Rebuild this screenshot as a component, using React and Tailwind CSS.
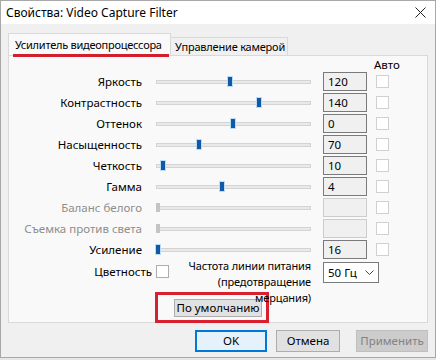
const ROWS = [
  { label: "Яркость", pos: 74, value: "120" },
  { label: "Контрастность", pos: 103, value: "140" },
  { label: "Оттенок", pos: 77, value: "0" },
  { label: "Насыщенность", pos: 43, value: "70" },
  { label: "Четкость", pos: 7, value: "10" },
  { label: "Гамма", pos: 66, value: "4" },
  { label: "Баланс белого", pos: 2, value: "", disabled: true },
  { label: "Съемка против света", pos: 2, value: "", disabled: true },
  { label: "Усиление", pos: 2, value: "16" },
];

function Slider({ pos, disabled }) {
  return (
    <div className="relative w-[155px] h-[19px] flex items-center">
      <div className="w-full h-[4px] bg-[#e9e9e9] border border-[#d4d4d4]"></div>
      {/* thumb */}
      <div
        className={
          disabled
            ? "absolute top-[5px] w-[4px] h-[9px] bg-[#c4c4c4]"
            : "absolute top-[5px] w-[4px] h-[9px] bg-[#0f5aa6] shadow-[0_0_0_1px_#bcdcf5]"
        }
        style={{ left: pos - 2 }}
      ></div>
    </div>
  );
}

function Row({ label, pos, value, disabled }) {
  return (
    <div className="flex items-center h-[19px]">
      <div className={"w-[133px] text-right whitespace-nowrap " + (disabled ? "text-[#8d8d8d]" : "text-black")}>{label}</div>
      <div className="ml-[14px]">
        <Slider pos={pos} disabled={disabled} />
      </div>
      <div
        className={
          "ml-[12px] w-[44px] h-[19px] flex items-center pl-[4px] bg-[#f0f0f0] border " +
          (disabled ? "border-[#cccccc]" : "border-[#7a7a7a]")
        }
      >
        {value}
      </div>
      <div className="ml-[9px] w-[13px] h-[13px] bg-white border border-[#d0d0d0]"></div>
    </div>
  );
}

export default function App() {
  return (
    <div className="w-[436px] h-[360px] bg-[#e6e6e6] flex flex-col text-[11.5px] leading-[16px] text-black [font-family:'Noto_Sans','Liberation_Sans',sans-serif]">
      <div className="w-[436px] h-[358px] bg-[#f0f0f0] border border-[#a8a8a8] flex flex-col">
        {/* title bar */}
        <div className="h-[23px] bg-white flex items-center justify-between pl-[5px] pr-[9px]">
          <span className="text-[12px] whitespace-nowrap">Свойства: Video Capture Filter</span>
          <svg width="11" height="11" viewBox="0 0 11 11">
            <path d="M0.5 0.5 L10.5 10.5 M10.5 0.5 L0.5 10.5" stroke="#222" strokeWidth="1" fill="none" />
          </svg>
        </div>

        <div className="flex flex-col px-[7px] pt-[9px]">
          {/* tabs */}
          <div className="flex items-end h-[22px]">
            <div className="relative w-[163px] h-[22px] bg-[#f9f9f9] border border-b-0 border-[#d9d9d9] flex items-start pt-[3px] pl-[6px] whitespace-nowrap text-[11px] tracking-[-0.25px]">
              Усилитель видеопроцессора
              <div className="absolute left-[4px] right-[1px] -bottom-[2px] h-[3px] bg-[#d21f2d] z-10"></div>
            </div>
            <div className="w-[117px] h-[18px] bg-[#f0f0f0] border border-l-0 border-b-0 border-[#d9d9d9] flex items-start pt-[1px] pl-[4px] whitespace-nowrap text-[11px] tracking-[-0.2px]">
              Управление камерой
            </div>
          </div>

          {/* panel */}
          <div className="w-[420px] h-[268px] bg-[#f9f9f9] border border-[#d9d9d9] flex flex-col">
            <div className="h-[16px] flex items-center pl-[365px] pt-[1px]">Авто</div>
            <div className="flex flex-col gap-[2px]">
              {ROWS.map((r) => (
                <Row key={r.label} {...r} />
              ))}
            </div>

            {/* bottom block */}
            <div className="flex -mt-[2px]">
              <div className="w-[160px] flex items-start justify-end pt-[7px]">
                <span className="mr-[4px] whitespace-nowrap">Цветность</span>
                <div className="w-[13px] h-[13px] mt-[1px] bg-white border border-[#adadad]"></div>
              </div>
              <div className="relative z-10 w-[142px] text-right leading-[16px] whitespace-nowrap text-[11px] tracking-[-0.15px] pt-[1px]">
                Частота линии питания
                <br />
                (предотвращение
                <br />
                мерцания)
              </div>
              <div className="ml-[12px] w-[56px] h-[21px] mt-[5px] bg-white border border-[#7a7a7a] flex items-center justify-between pl-[4px] pr-[4px]">
                <span className="whitespace-nowrap">50 Гц</span>
                <svg width="9" height="6" viewBox="0 0 9 6">
                  <path d="M0.5 0.5 L4.5 4.5 L8.5 0.5" stroke="#444" strokeWidth="1" fill="none" />
                </svg>
              </div>
            </div>

            <div className="flex -mt-[14px] pl-[146px]">
              <div className="border-[3px] border-[#d9202e] pl-[16px] pt-[4px] w-[114px] h-[31px]">
                <div className="w-[88px] h-[18px] bg-[#e1e1e1] border border-[#adadad] flex items-center justify-center whitespace-nowrap">
                  По умолчанию
                </div>
              </div>
            </div>
          </div>

          {/* buttons */}
          <div className="flex pl-[187px] pt-[7px]">
            <div className="w-[72px] h-[22px] bg-[#e5f1fb] border-2 border-[#0078d7] flex items-center justify-center">OK</div>
            <div className="w-[64px] h-[22px] bg-[#e1e1e1] border border-[#adadad] flex items-center justify-center ml-[9px]">Отмена</div>
            <div className="w-[72px] h-[22px] bg-[#cccccc] border border-[#bfbfbf] text-[#838383] flex items-center justify-center ml-[16px] whitespace-nowrap">Применить</div>
          </div>
        </div>
      </div>
    </div>
  );
}
